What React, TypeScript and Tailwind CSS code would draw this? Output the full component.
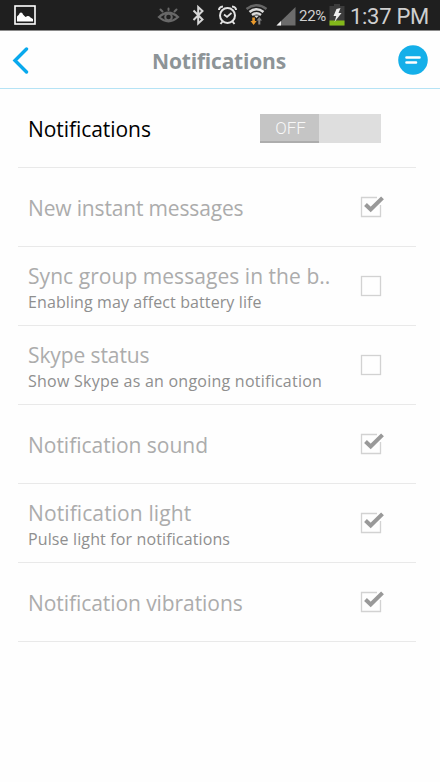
import { useState } from "react"

type Setting = {
  title: string
  detail?: string
  checked: boolean
  titleTracking: string
  detailTracking?: string
}

const initialSettings: Setting[] = [
  { title: "New instant messages", checked: true, titleTracking: "tracking-[-0.16px]" },
  {
    title: "Sync group messages in the b..",
    detail: "Enabling may affect battery life",
    checked: false,
    titleTracking: "tracking-[0.05px]",
    detailTracking: "tracking-[0.1px]",
  },
  {
    title: "Skype status",
    detail: "Show Skype as an ongoing notification",
    checked: false,
    titleTracking: "tracking-[-0.1px]",
    detailTracking: "tracking-[0.24px]",
  },
  { title: "Notification sound", checked: true, titleTracking: "tracking-[-0.02px]" },
  {
    title: "Notification light",
    detail: "Pulse light for notifications",
    checked: true,
    titleTracking: "tracking-[0.1px]",
    detailTracking: "tracking-[0.13px]",
  },
  { title: "Notification vibrations", checked: true, titleTracking: "tracking-[-0.07px]" },
]

function PictureIcon() {
  return (
    <svg width="22" height="20" viewBox="0 0 22 20" className="shrink-0">
      <rect x="1" y="1" width="20" height="18" fill="none" stroke="#fff" strokeWidth="1.6" />
      <path d="M3 16.5V11.5L5 9.500Q5.500 7.500 7 7.500Q8.500 7.500 9 9.500L11.500 12L13.500 11Q15.500 10.500 16.500 12.500L19 14V16.5Z" fill="#fff" />
    </svg>
  )
}

function StatusIcons() {
  return (
    <svg width="140" height="30" viewBox="157 0 140 30" className="shrink-0">
      {/* smart stay eye */}
      <g fill="none" stroke="#686868" strokeLinecap="round">
        <path d="M159 17Q168.500 8.500 178 17Q168.500 25.500 159 17Z" strokeWidth="2.200" />
        <circle cx="168.500" cy="17" r="3.300" strokeWidth="2" />
        <path d="M168.500 10V8.500M162.500 11.500L160.500 9.500M174.500 11.500L176.500 9.500" strokeWidth="2" />
      </g>

      {/* bluetooth */}
      <path d="M193.500 10.500L202.500 19.500L198.200 23.500V7L202.500 11L193.500 20" fill="none" stroke="#d6d6d6" strokeWidth="2" />

      {/* alarm */}
      <g fill="none" stroke="#e2e2e2">
        <circle cx="227.500" cy="15.500" r="7.500" strokeWidth="2" />
        <path d="M224 14.500L227 17L231.500 13" strokeWidth="1.700" />
        <path d="M219 10Q219 7 223 6.500M236 10Q236 7 232 6.500" strokeWidth="2" />
        <path d="M222.500 21.500L220.500 24M232.500 21.500L234.500 24" strokeWidth="2" />
      </g>

      {/* wifi with traffic arrows */}
      <g fill="none">
        <path d="M246.500 9Q256.500 1.500 266.500 9" stroke="#666" strokeWidth="2.400" />
        <path d="M249.500 12Q256.500 6.500 263.500 12" stroke="#dcdcdc" strokeWidth="2.600" />
        <path d="M252 15Q256.500 11.500 261 15" stroke="#dcdcdc" strokeWidth="2.400" />
      </g>
      <path d="M254 15.500H259L256.500 18Z" fill="#dcdcdc" />
      <path d="M252.300 17.500H254.900V21H256.700L253.600 25L250.500 21H252.300Z" fill="#e8992c" />
      <path d="M258.300 24.500H260.300V20.500H262L259.300 17L256.600 20.500H258.300Z" fill="#858585" />

      {/* cell signal */}
      <path d="M295.500 7V25.500H276.500Z" fill="#6c6c6c" />
      <path d="M281 21V25.500H276.500Z" fill="#f0f0f0" />
    </svg>
  )
}

function BatteryIcon() {
  return (
    <svg width="16" height="22" viewBox="0 0 16 22" className="shrink-0">
      <path d="M5 0H11V2H15.500V21.500H0.500V2H5Z" fill="#3c3c3c" />
      <rect x="0.500" y="16.500" width="15" height="5" fill="#83b81a" />
      <path d="M7.500 5L11.500 4L9.500 9H12.500L5.500 18L7.300 12H4.500Z" fill="#eee" />
    </svg>
  )
}

function StatusBar() {
  return (
    <div className="flex h-[31px] items-center border-b border-[#8a8a8a] bg-[#1f1f1f] pl-[14px] font-[Roboto,sans-serif]">
      <PictureIcon />
      <div className="ml-[121px] flex items-center">
        <StatusIcons />
        <span className="ml-[2px] w-[30px] pt-px text-[15px] leading-[30px] tracking-[-0.3px] whitespace-nowrap text-[#cfcfcf]">
          22%
        </span>
        <BatteryIcon />
        <span className="ml-[5px] pt-[3px] text-[22px] leading-[27px] tracking-[-0.3px] whitespace-nowrap text-[#cfcfcf]">1:37 PM</span>
      </div>
    </div>
  )
}

function Header() {
  return (
    <header className="flex h-[58px] items-center justify-between border-b border-[#b5e3f5] pr-[12px] pl-[12px]">
      <button className="w-[30px]">
        <svg width="18" height="28" viewBox="0 0 18 28">
          <path d="M14.500 3L3 14.500L14.500 26" fill="none" stroke="#09a9ed" strokeWidth="3.400" strokeLinecap="round" />
        </svg>
      </button>
      <h1 className="pt-[3px] pr-[2px] text-[21px] leading-7 font-bold tracking-[-0.2px] text-[#8d9497]">Notifications</h1>
      <button>
        <svg width="30" height="30" viewBox="0 0 30 30">
          <circle cx="15" cy="15" r="14.800" fill="#14afe9" />
          <path d="M8.500 12.500H21.500M8.500 17.500H18" stroke="#fff" strokeWidth="2.600" strokeLinecap="round" />
        </svg>
      </button>
    </header>
  )
}

function Checkbox({ checked }: { checked: boolean }) {
  return (
    <svg width="26" height="24" viewBox="0 0 26 24" className="shrink-0">
      {checked ? (
        <>
          <path d="M17 2.500H1.500V21.500H20.500V10" fill="none" stroke="#d2d2d2" strokeWidth="1.300" />
          <path d="M5.500 9.500L10.700 14.500L22.500 2.800" fill="none" stroke="#999" strokeWidth="4" />
        </>
      ) : (
        <rect x="1.500" y="2.500" width="19" height="19" fill="none" stroke="#d2d2d2" strokeWidth="1.300" />
      )}
    </svg>
  )
}

export default function App() {
  const [settings, setSettings] = useState(initialSettings)

  const toggle = (index: number) => {
    setSettings(settings.map((s, i) => (i === index ? { ...s, checked: !s.checked } : s)))
  }

  return (
    <div className="h-[782px] w-[440px] overflow-hidden bg-[#fefefe] font-['Open_Sans','Noto_Sans',sans-serif]">
      <StatusBar />
      <Header />
      <main className="mr-[24px] ml-[18px]">
        <div className="flex h-[79px] items-center justify-between border-b border-[#e9e9e9] pr-[35px] pl-[10px]">
          <span className="pt-px text-[21px] leading-7 tracking-[-0.06px] text-black">Notifications</span>
          <div className="flex h-[29px] w-[121px] bg-[#dedede]">
            <div className="flex w-[59px] items-center justify-center border-b-2 border-[#adadad] bg-[#c5c5c5] pt-[3px] pl-[2px] font-[Roboto,sans-serif] text-[17px] font-light text-[#f8f8f8]">
              OFF
            </div>
          </div>
        </div>
        {settings.map((s, i) => (
          <div
            key={s.title}
            onClick={() => toggle(i)}
            className="flex h-[79px] items-center justify-between border-b border-[#e9e9e9] pr-[30px] pl-[10px] whitespace-nowrap"
          >
            <div className={`flex flex-col ${s.detail ? "gap-px pt-[3px]" : "pt-px"}`}>
              <span className={`text-[21px] leading-7 text-[#acacac] ${s.titleTracking}`}>{s.title}</span>
              {s.detail && <span className={`text-[16px] leading-[23px] text-[#8f8f8f] ${s.detailTracking}`}>{s.detail}</span>}
            </div>
            <Checkbox checked={s.checked} />
          </div>
        ))}
      </main>
    </div>
  )
}
